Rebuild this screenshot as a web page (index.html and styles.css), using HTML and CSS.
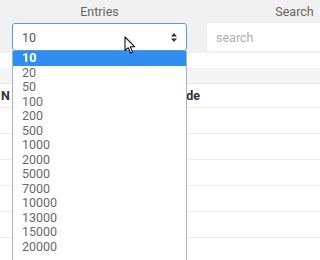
FILE: index.html
```html
<!DOCTYPE html>
<html lang="en">
<head>
  <meta charset="UTF-8">
  <title>entries</title>
  <link rel="stylesheet" href="styles.css">
</head>
<body>
<div class="page">
  <div class="toolbar">
    <div class="field">
      <label class="label">Entries</label>
      <div class="select">
        <span>10</span>
        <svg class="arrows" width="6" height="9" viewBox="0 0 6 9"><path d="M3 0 L6 3.5 L0 3.5 Z M3 9 L6 5.5 L0 5.5 Z" fill="#333"/></svg>
      </div>
      <ul class="options">
        <li class="current">10</li>
        <li>20</li>
        <li>50</li>
        <li>100</li>
        <li>200</li>
        <li>500</li>
        <li>1000</li>
        <li>2000</li>
        <li>5000</li>
        <li>7000</li>
        <li>10000</li>
        <li>13000</li>
        <li>15000</li>
        <li>20000</li>
      </ul>
    </div>
    <div class="field">
      <label class="label">Search</label>
      <input class="search" type="text" placeholder="search">
    </div>
  </div>

  <table class="grid">
    <tr class="spacer"><td></td><td></td></tr>
    <tr class="band"><td></td><td></td></tr>
    <tr class="head"><th class="first">N</th><th class="second">Code</th></tr>
    <tr><td></td><td></td></tr>
    <tr><td></td><td></td></tr>
    <tr><td></td><td></td></tr>
    <tr><td></td><td></td></tr>
    <tr><td></td><td></td></tr>
    <tr><td></td><td></td></tr>
  </table>

  <!-- mouse pointer over the select -->
  <svg class="cursor" width="12" height="18" viewBox="0 0 12 18">
    <path d="M1 1 L1 14.5 L4.2 11.6 L6.6 17 L8.6 16.1 L6.3 10.8 L10.8 10.8 Z" fill="#fff" stroke="#111" stroke-width="1.1" stroke-linejoin="round"/>
  </svg>
</div>
</body>
</html>
```

FILE: styles.css
```css
* {
  padding: 0;
  margin: 0;
  list-style: none;
  box-sizing: border-box;
}

body {
  background: #fff;
  font-family: Roboto, "Liberation Sans", sans-serif;
  font-size: 12.5px;
  color: #555;
}

.page {
  width: 320px;
  height: 260px;
  overflow: hidden;
  position: relative;
}

.toolbar {
  display: flex;
  gap: 20px;
  padding: 4px 12px 2px;
  background: #f1f1f1;
  width: 420px;
}

.field {
  width: 175px;
  position: relative;
  display: flex;
  flex-direction: column;
  gap: 4px;
}

.label {
  display: block;
  text-align: center;
  line-height: 15px;
  color: #666;
}

.select {
  height: 28px;
  background: #fff;
  border: 1px solid #5b9bd5;
  border-radius: 3px;
  display: flex;
  align-items: center;
  justify-content: space-between;
  padding: 0 9px 0 9px;
  color: #555;
}

.arrows {
  display: block;
}

.search {
  height: 28px;
  border: 0;
  border-radius: 3px;
  background: #fff;
  padding: 0 9px;
  font: inherit;
  outline: none;
}

.search::placeholder {
  color: #b0b0b0;
}

/* the open list of the select, it runs on below the window */
.options {
  position: absolute;
  top: 100%;
  left: 0;
  width: 175px;
  background: #fff;
  border: 1px solid #a9b3c2;
  border-top: 0;
  border-bottom: 0;
  padding-bottom: 20px;
}

.options li {
  height: 14.5px;
  line-height: 14.5px;
  padding-left: 9px;
  color: #6a6a6a;
}

.options li.current {
  background: #2f8ef0;
  color: #fff;
  font-weight: bold;
}

.grid {
  width: 100%;
  border-collapse: collapse;
}

.grid td,
.grid th {
  height: 26px;
  border-bottom: 1px solid #ececec;
  padding: 0;
  text-align: left;
}

.grid .spacer td {
  height: 15px;
  border-bottom: 0;
}

.grid .band td {
  height: 15px;
  background: #f5f5f5;
  border-bottom: 1px solid #e8e8e8;
}

.grid .head th {
  height: 24px;
  color: #333;
  font-weight: bold;
}

.grid .first {
  width: 171px;
  padding-left: 1px;
}

.grid .second {
  padding-left: 0;
}

.cursor {
  position: absolute;
  left: 124px;
  top: 36px;
}
```
